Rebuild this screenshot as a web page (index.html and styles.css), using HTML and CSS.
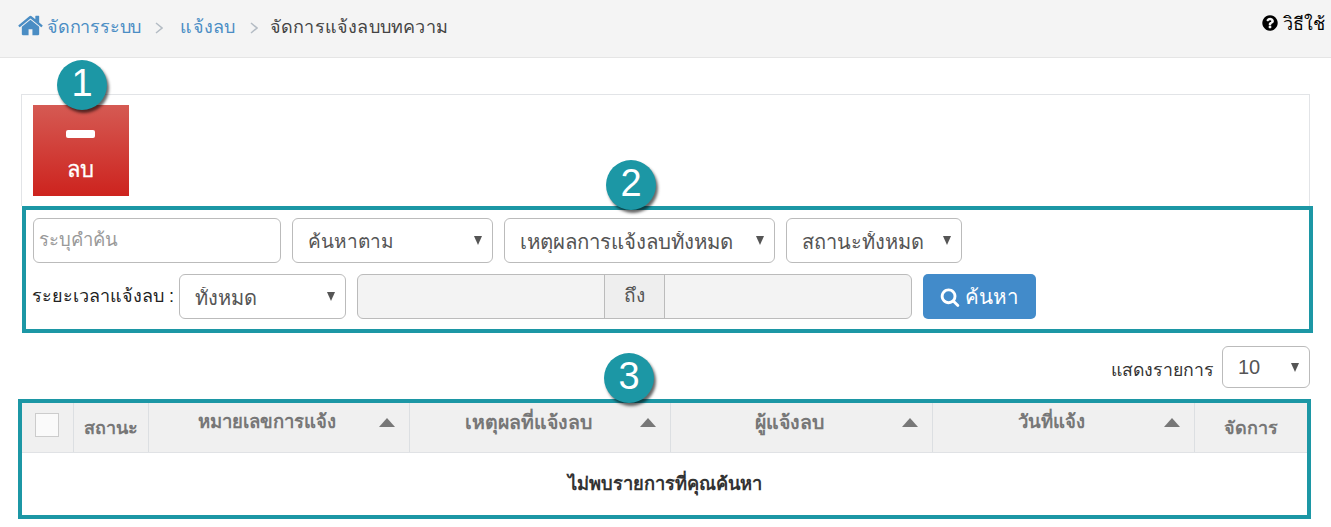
FILE: index.html
```html
<!DOCTYPE html>
<html lang="th">
<head>
<meta charset="utf-8">
<title>จัดการแจ้งลบบทความ</title>
<link rel="stylesheet" href="styles.css">
</head>
<body>
<header class="topbar">
  <nav class="crumbs">
    <svg class="home-icon" viewBox="0 0 1792 1792"><path d="M1472 992v480q0 26-19 45t-45 19h-384v-384h-256v384h-384q-26 0-45-19t-19-45v-480q0-1 .5-3t.5-3l575-474 575 474q1 2 1 6zm223-69l-62 74q-8 9-21 11h-3q-13 0-21-7l-692-577-692 577q-12 8-24 7-13-2-21-11l-62-74q-8-10-7-23.500t11-21.500l719-599q32-26 76-26t76 26l244 204v-195q0-14 9-23t23-9h192q14 0 23 9t9 23v408l219 182q10 8 11 21.500t-7 23.500z"/></svg>
    <a class="crumb-link first" href="#">จัดการระบบ</a>
    <svg class="chevron" viewBox="0 0 8 12"><path d="M1 1l6 5-6 5"/></svg>
    <a class="crumb-link" href="#">แจ้งลบ</a>
    <svg class="chevron tight" viewBox="0 0 8 12"><path d="M1 1l6 5-6 5"/></svg>
    <span class="crumb-current">จัดการแจ้งลบบทความ</span>
  </nav>
  <a class="help" href="#">
    <svg class="help-icon" viewBox="0 0 1792 1792"><path d="M1024 1376v-192q0-14-9-23t-23-9h-192q-14 0-23 9t-9 23v192q0 14 9 23t23 9h192q14 0 23-9t9-23zm256-672q0-88-55.500-163t-138.500-116-170-41q-243 0-371 213-15 24 8 42l132 100q7 6 19 6 16 0 25-12 53-68 86-92 34-24 86-24 48 0 85.500 26t37.500 59q0 38-20 61t-68 45q-63 28-115.500 86.500t-52.500 125.500v36q0 14 9 23t23 9h192q14 0 23-9t9-23q0-19 21.500-49.500t54.500-49.500q32-18 49-28.500t46-35 44.500-48 28-60.500 12.500-81zm384 192q0 209-103 385.500t-279.500 279.500-385.500 103-385.500-103-279.500-279.500-103-385.500 103-385.500 279.500-279.500 385.500-103 385.500 103 279.500 279.500 103 385.500z"/></svg>
    <span>วิธีใช้</span>
  </a>
</header>

<main class="page">
  <section class="toolbar">
    <button class="delete-btn" type="button">
      <span class="minus"></span>
      <span class="delete-label">ลบ</span>
    </button>
    <span class="badge badge-one">1</span>
  </section>

  <section class="filter-frame">
    <span class="badge badge-two">2</span>
    <div class="filter-row">
      <input class="field keyword" type="text" placeholder="ระบุคำค้น">
      <div class="select-box w-by"><select><option>ค้นหาตาม</option></select></div>
      <div class="select-box w-reason"><select><option>เหตุผลการแจ้งลบทั้งหมด</option></select></div>
      <div class="select-box w-status"><select><option>สถานะทั้งหมด</option></select></div>
    </div>
    <div class="filter-row">
      <label class="range-label">ระยะเวลาแจ้งลบ :</label>
      <div class="select-box w-range"><select><option>ทั้งหมด</option></select></div>
      <div class="date-group">
        <input class="date-input start" type="text" disabled>
        <span class="date-addon">ถึง</span>
        <input class="date-input end" type="text" disabled>
      </div>
      <button class="search-btn" type="button">
        <svg class="search-icon" viewBox="0 0 1792 1792"><path d="M1216 832q0-185-131.500-316.500t-316.500-131.500-316.500 131.500-131.500 316.500 131.500 316.500 316.500 131.500 316.500-131.500 131.500-316.500zm512 832q0 52-38 90t-90 38q-54 0-90-38l-343-342q-179 124-399 124-143 0-273.500-55.500t-225-150-150-225-55.500-273.500 55.500-273.500 150-225 225-150 273.500-55.500 273.500 55.500 225 150 150 225 55.500 273.500q0 220-124 399l343 343q37 37 37 90z"/></svg>
        <span>ค้นหา</span>
      </button>
    </div>
  </section>

  <div class="per-page">
    <span class="per-page-label">แสดงรายการ</span>
    <div class="select-box w-per"><select><option>10</option></select></div>
  </div>

  <section class="table-frame">
    <span class="badge badge-three">3</span>
    <table class="grid">
      <thead>
        <tr>
          <th class="c-check"><span class="checkbox"></span></th>
          <th class="c-status">สถานะ</th>
          <th class="c-sort"><div class="sort-head"><span>หมายเลขการแจ้ง</span><i class="sort-arrow"></i></div></th>
          <th class="c-sort large"><div class="sort-head"><span>เหตุผลที่แจ้งลบ</span><i class="sort-arrow"></i></div></th>
          <th class="c-sort wide large"><div class="sort-head"><span>ผู้แจ้งลบ</span><i class="sort-arrow"></i></div></th>
          <th class="c-sort wide"><div class="sort-head"><span>วันที่แจ้ง</span><i class="sort-arrow"></i></div></th>
          <th class="c-manage">จัดการ</th>
        </tr>
      </thead>
      <tbody>
        <tr><td class="empty" colspan="7">ไม่พบรายการที่คุณค้นหา</td></tr>
      </tbody>
    </table>
  </section>
</main>
</body>
</html>
```

FILE: styles.css
```css
* { box-sizing: border-box; }
html, body { margin: 0; padding: 0; background: #fff; overflow: hidden; }
body {
  width: 1331px;
  height: 527px;
  font-family: "Liberation Sans", "Noto Sans", "DejaVu Sans", sans-serif;
  font-size: 18px;
  color: #333;
}
a { text-decoration: none; }

.topbar {
  height: 58px;
  background: #f4f4f4;
  border-bottom: 1px solid #e5e5e5;
  display: flex;
  justify-content: space-between;
  align-items: flex-start;
  padding-left: 17px;
  overflow: hidden;
}
.crumbs { display: flex; align-items: center; height: 53px; }
.home-icon { width: 27px; height: 27px; fill: #4a8dc4; margin-right: 3px; margin-top: -2px; }
.crumb-link { color: #4a8dc4; font-size: 18px; letter-spacing: 0.3px; }
.crumb-link.first { letter-spacing: -0.2px; }
.crumb-current { color: #444; font-size: 18px; letter-spacing: 0.2px; }
.chevron { width: 8px; height: 12px; margin: 2px 17px 0 14px; fill: none; stroke: #b4bcc4; stroke-width: 1.5; }
.chevron.tight { margin-right: 12px; }
.help { display: flex; align-items: center; height: 46px; color: #000; font-size: 18px; padding-right: 6px; }
.help-icon { width: 18px; height: 18px; fill: #000; margin-right: 4px; }

.page { position: relative; }
.toolbar {
  position: relative;
  margin: 36px 0 0 21px;
  width: 1289px;
  height: 112px;
  border: 1px solid #e2e4e7;
  border-bottom: 0;
  padding: 10px 11px;
}
.delete-btn {
  width: 96px;
  height: 91px;
  border: 0;
  padding: 25px 0 0;
  display: flex;
  flex-direction: column;
  align-items: center;
  color: #fff;
  font-family: inherit;
  background: linear-gradient(#d55a53, #cd231e);
}
.minus { width: 29px; height: 8px; background: #fff; border-radius: 2px; margin: 0 1px 19px 0; }
.delete-label { font-size: 22px; line-height: 26px; margin-right: 2px; -webkit-text-stroke: 0.3px #fff; }

.badge {
  position: absolute;
  width: 50px;
  height: 50px;
  border-radius: 50%;
  background: #1c97a5;
  color: #fff;
  font-size: 38px;
  line-height: 47px;
  text-align: center;
  box-shadow: 2px 3px 3px rgba(0, 0, 0, 0.6);
  z-index: 2;
}
.badge-one { left: 35px; top: -35px; }
.badge-two { left: 580px; top: -50px; }
.badge-three { left: 582px; top: -50px; }

.filter-frame {
  position: relative;
  margin-left: 22px;
  width: 1291px;
  height: 127px;
  border: 4px solid #1c97a5;
  padding: 8px 7px;
  display: flex;
  flex-direction: column;
  gap: 11px;
}
.filter-row { display: flex; align-items: center; gap: 11px; height: 45px; }
.field, .select-box select, .date-group {
  height: 45px;
  border: 1px solid #bbb;
  border-radius: 6px;
  background: #fff;
  font-family: inherit;
  font-size: 20px;
  color: #555;
}
.keyword { width: 248px; padding: 0 5px 2px; font-size: 18.5px; }
.keyword::placeholder { color: #999; opacity: 1; }
.select-box { position: relative; }
.select-box select {
  width: 100%;
  appearance: none;
  -webkit-appearance: none;
  padding: 2px 14px 0 15px;
}
.select-box::after {
  content: "";
  position: absolute;
  right: 11px;
  top: 18px;
  border-left: 4px solid transparent;
  border-right: 4px solid transparent;
  border-top: 9px solid #555;
  pointer-events: none;
}
.w-by { width: 201px; }
.w-by select { font-size: 19px; }
.w-reason { width: 271px; }
.w-reason select { font-size: 20.4px; }
.w-status { width: 176px; }
.w-range { width: 167px; margin-left: -6px; }
.w-per { width: 88px; height: 42px; }
.w-per select { height: 42px; padding-top: 0; }
.w-per::after { top: 17px; }
.range-label { width: 142px; margin-left: -1px; color: #222; font-size: 18px; white-space: nowrap; padding-bottom: 3px; }
.date-group { width: 555px; display: flex; background: #f3f3f3; overflow: hidden; }
.date-input { border: 0; background: transparent; height: 100%; min-width: 0; }
.date-input.start { width: 246px; }
.date-input.end { flex: 1; }
.date-addon {
  width: 61px;
  background: #eee;
  border: solid #bbb;
  border-width: 0 1px;
  text-align: center;
  font-size: 19px;
  line-height: 41px;
}
.search-btn {
  width: 113px;
  height: 45px;
  border: 0;
  border-radius: 5px;
  background: #428bca;
  color: #fff;
  font-family: inherit;
  font-size: 20.5px;
  display: flex;
  align-items: center;
  justify-content: center;
  gap: 5px;
  padding: 0;
}
.search-icon { width: 20px; height: 20px; fill: #fff; }

.per-page {
  display: flex;
  justify-content: flex-end;
  align-items: center;
  gap: 8px;
  width: 1310px;
  margin-top: 13px;
  height: 42px;
}
.per-page-label { color: #333; font-size: 17.7px; padding-top: 6px; }

.table-frame {
  position: relative;
  margin: 11px 0 0 18px;
  width: 1293px;
  height: 120px;
  border: 4px solid #1c97a5;
}
.grid { width: 1285px; height: 112px; border-collapse: collapse; table-layout: fixed; }
.grid th {
  height: 49px;
  padding: 0;
  background: #f0f0f0;
  color: #777;
  font-size: 18px;
  font-weight: bold;
  border-right: 1px solid #dcdfe2;
  border-bottom: 1px solid #e0e2e5;
}
.grid th:last-child { border-right: 0; }
.c-check { width: 51px; }
.grid th.c-check { padding-top: 10px; vertical-align: top; }
.c-status { width: 75px; }
.c-sort { width: 261px; }
.c-sort.wide { width: 262px; }
.grid th.c-sort { font-size: 18.5px; }
.grid th.c-sort.large { font-size: 19.5px; }
.c-manage { width: 113px; }
.checkbox { display: block; width: 24px; height: 24px; margin: 0 auto 0 13px; border: 1px solid #ccc; background: #fafafa; }
.sort-head { display: flex; align-items: flex-start; height: 48px; padding: 4px 14px 0 7px; }
.sort-head span { flex: 1; text-align: center; }
.sort-arrow {
  width: 0;
  height: 0;
  margin-top: 11px;
  border-left: 8px solid transparent;
  border-right: 8px solid transparent;
  border-bottom: 9px solid #777;
}
.empty { text-align: center; font-weight: bold; font-size: 18.3px; color: #333; }
```
